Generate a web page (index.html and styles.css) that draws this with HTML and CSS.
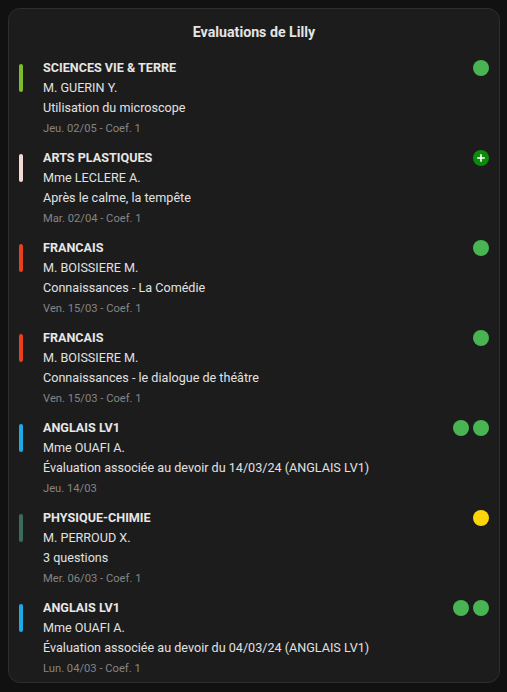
FILE: index.html
```html
<!DOCTYPE html>
<html lang="fr">
<head>
<meta charset="utf-8">
<title>Evaluations de Lilly</title>
<link rel="stylesheet" href="styles.css">
</head>
<body>
<div class="card">
  <div class="title">Evaluations de Lilly</div>
  <div class="list">
    <div class="row">
      <span class="bar c-svt"></span>
      <div class="info">
        <div class="subject">SCIENCES VIE &amp; TERRE</div>
        <div class="line">M. GUERIN Y.</div>
        <div class="line">Utilisation du microscope</div>
        <div class="date">Jeu. 02/05 - Coef. 1</div>
      </div>
      <div class="marks"><span class="dot green"></span></div>
    </div>
    <div class="row">
      <span class="bar c-arts"></span>
      <div class="info">
        <div class="subject">ARTS PLASTIQUES</div>
        <div class="line">Mme LECLERE A.</div>
        <div class="line">Après le calme, la tempête</div>
        <div class="date">Mar. 02/04 - Coef. 1</div>
      </div>
      <div class="marks"><span class="dot plus"><svg width="16" height="16" viewBox="0 0 16 16"><path d="M8 4.2v7.6M4.2 8h7.6" stroke="#ffffff" stroke-width="1.6" fill="none"/></svg></span></div>
    </div>
    <div class="row">
      <span class="bar c-fr"></span>
      <div class="info">
        <div class="subject">FRANCAIS</div>
        <div class="line">M. BOISSIERE M.</div>
        <div class="line">Connaissances - La Comédie</div>
        <div class="date">Ven. 15/03 - Coef. 1</div>
      </div>
      <div class="marks"><span class="dot green"></span></div>
    </div>
    <div class="row">
      <span class="bar c-fr"></span>
      <div class="info">
        <div class="subject">FRANCAIS</div>
        <div class="line">M. BOISSIERE M.</div>
        <div class="line">Connaissances - le dialogue de théâtre</div>
        <div class="date">Ven. 15/03 - Coef. 1</div>
      </div>
      <div class="marks"><span class="dot green"></span></div>
    </div>
    <div class="row">
      <span class="bar c-ang"></span>
      <div class="info">
        <div class="subject">ANGLAIS LV1</div>
        <div class="line">Mme OUAFI A.</div>
        <div class="line">Évaluation associée au devoir du 14/03/24 (ANGLAIS LV1)</div>
        <div class="date">Jeu. 14/03</div>
      </div>
      <div class="marks"><span class="dot green"></span><span class="dot green"></span></div>
    </div>
    <div class="row">
      <span class="bar c-pc"></span>
      <div class="info">
        <div class="subject">PHYSIQUE-CHIMIE</div>
        <div class="line">M. PERROUD X.</div>
        <div class="line">3 questions</div>
        <div class="date">Mer. 06/03 - Coef. 1</div>
      </div>
      <div class="marks"><span class="dot yellow"></span></div>
    </div>
    <div class="row">
      <span class="bar c-ang"></span>
      <div class="info">
        <div class="subject">ANGLAIS LV1</div>
        <div class="line">Mme OUAFI A.</div>
        <div class="line">Évaluation associée au devoir du 04/03/24 (ANGLAIS LV1)</div>
        <div class="date">Lun. 04/03 - Coef. 1</div>
      </div>
      <div class="marks"><span class="dot green"></span><span class="dot green"></span></div>
    </div>
  </div>
</div>
</body>
</html>
```

FILE: styles.css
```css
html, body {
  margin: 0;
  padding: 0;
  background: #111111;
}
body {
  padding: 8px 7px 8px 8px;
  font-family: Roboto, "Liberation Sans", sans-serif;
  color: #e1e1e1;
}
.card {
  box-sizing: border-box;
  width: 492px;
  height: 675px;
  background: #1c1c1c;
  border: 1px solid #2e2e2e;
  border-radius: 12px;
  padding: 0 10px 0 10px;
}
.title {
  text-align: center;
  font-weight: 700;
  font-size: 14.2px;
  line-height: 20px;
  padding-top: 13px;
  height: 48px;
  box-sizing: border-box;
  color: #e4e4e4;
}
.list {
  display: flex;
  flex-direction: column;
  gap: 10px;
}
.row {
  display: flex;
  align-items: flex-start;
  height: 80px;
}
.bar {
  width: 4px;
  height: 28px;
  border-radius: 2px;
  margin-top: 7px;
  margin-right: 20px;
  flex: none;
}
.c-svt { background: #7cbb2c; }
.c-arts { background: #f5d9d6; }
.c-fr { background: #e8401c; }
.c-ang { background: #1eaae7; }
.c-pc { background: #3b6b5c; }
.info {
  flex: 1;
  font-size: 12.6px;
  line-height: 20px;
  padding-top: 1px;
}
.subject {
  font-weight: 700;
  color: #e6e6e6;
}
.line {
  color: #e1e1e1;
}
.date {
  font-size: 11.2px;
  line-height: 20px;
  color: #858585;
  padding-top: 1px;
}
.marks {
  display: flex;
  gap: 4px;
  padding-top: 3px;
}
.dot {
  width: 16px;
  height: 16px;
  border-radius: 50%;
  display: block;
}
.dot svg {
  display: block;
}
.green { background: #48b552; }
.yellow { background: #fcd40a; }
.plus { background: #0b8a0b; }
```
